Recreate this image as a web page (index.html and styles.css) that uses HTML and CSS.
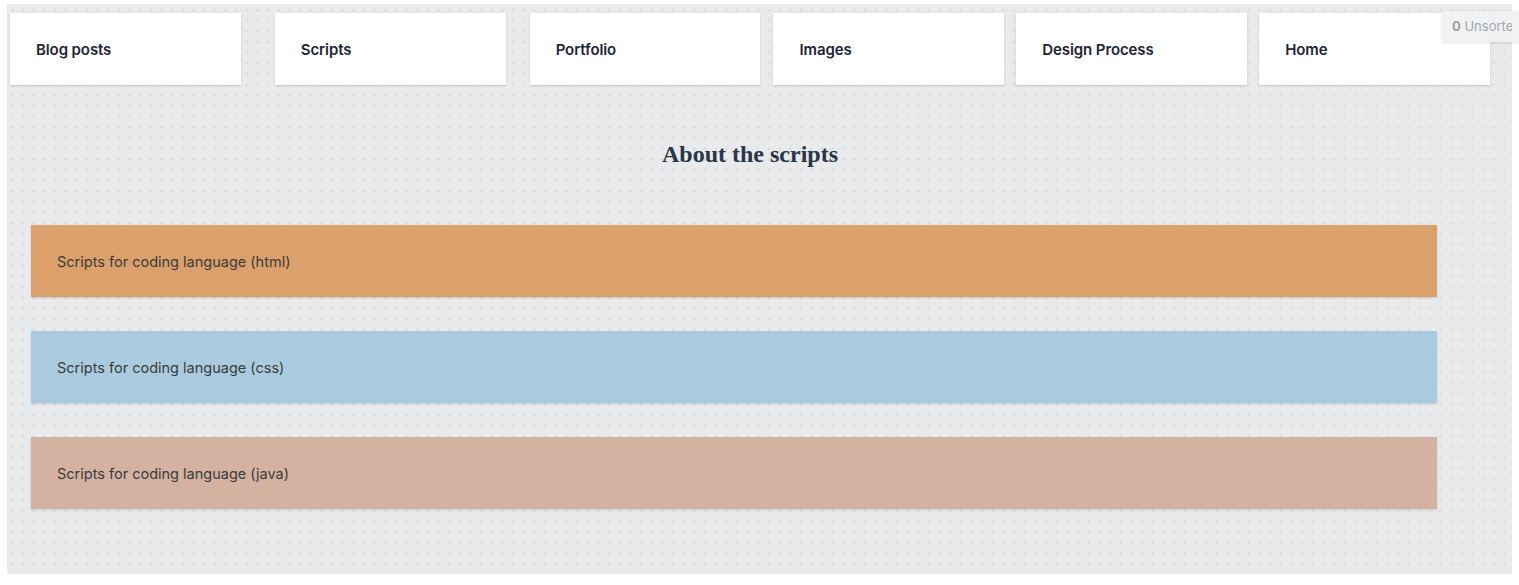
FILE: index.html
```html
<!DOCTYPE html>
<html>
<head>
<meta charset="utf-8">
<link rel="stylesheet" href="styles.css">
</head>
<body>
<div class="board">
  <div class="content">
    <div class="cards">
      <div class="card">Blog posts</div>
      <div class="card gap-34">Scripts</div>
      <div class="card gap-24">Portfolio</div>
      <div class="card gap-13">Images</div>
      <div class="card">Design Process</div>
      <div class="card">Home</div>
    </div>
    <h1 class="title">About the scripts</h1>
    <div class="bars">
      <div class="bar bar-html">Scripts for coding language (html)</div>
      <div class="bar bar-css">Scripts for coding language (css)</div>
      <div class="bar bar-java">Scripts for coding language (java)</div>
    </div>
  </div>
  <div class="badge"><span class="badge-text"><b>0</b> Unsorted</span></div>
</div>
</body>
</html>
```

FILE: styles.css
```css
html, body {
  margin: 0;
  padding: 0;
  background: #ffffff;
  overflow: hidden;
  width: 1519px;
  height: 585px;
}

body {
  font-family: Inter, "Liberation Sans", sans-serif;
}

.board {
  position: relative;
  margin: 4px 7px 0 7px;
  height: 570px;
  background-color: #e9eaec;
  background-image: radial-gradient(circle, #d5d6d9 0.9px, transparent 1.2px);
  background-size: 10.67px 10.67px;
  background-position: 0px 1px;
  overflow: visible;
}

.content {
  width: 1480px;
  padding: 9px 0 0 3px;
  display: flex;
  flex-direction: column;
}

.cards {
  display: flex;
  gap: 12px;
}

.card {
  width: 231px;
  height: 72px;
  box-sizing: border-box;
  background: #ffffff;
  box-shadow: 0 1px 2px rgba(0, 0, 0, 0.16);
  display: flex;
  align-items: center;
  padding: 0 26px;
  font-size: 15px;
  font-weight: 600;
  color: #1e2533;
  letter-spacing: -0.1px;
}

.gap-34 { margin-left: 22px; }
.gap-24 { margin-left: 12px; }
.gap-13 { margin-left: 1px; }

.title {
  margin: 54px 0 0 0;
  text-align: center;
  font-family: "Liberation Serif", "DejaVu Serif", serif;
  font-weight: 700;
  font-size: 24px;
  line-height: 30px;
  color: #2a3648;
}

.bars {
  display: flex;
  flex-direction: column;
  gap: 34px;
  margin: 56px 0 0 21px;
  width: 1406px;
}

.bar {
  height: 72px;
  box-sizing: border-box;
  display: flex;
  align-items: center;
  padding: 0 26px;
  font-size: 14.5px;
  color: #3b3b3b;
  box-shadow: 0 1px 2px rgba(0, 0, 0, 0.14);
}

.bar-html { background: #dca06c; }
.bar-css { background: #aacbdf; }
.bar-java { background: #d4b1a1; }

.badge {
  position: absolute;
  left: 1435px;
  top: 7px;
  width: 90px;
  height: 31px;
  box-sizing: border-box;
  padding: 0 0 2px 10px;
  display: flex;
  align-items: center;
  white-space: nowrap;
  background: rgba(240, 241, 243, 0.95);
  border-radius: 3px;
  box-shadow: 0 1px 3px rgba(0, 0, 0, 0.12);
  font-size: 13px;
  color: #a2a6ab;
}

.badge-text {
  display: block;
  width: 60px;
  overflow: hidden;
}

.badge b {
  font-weight: 700;
  color: #9a9ea4;
}
```
